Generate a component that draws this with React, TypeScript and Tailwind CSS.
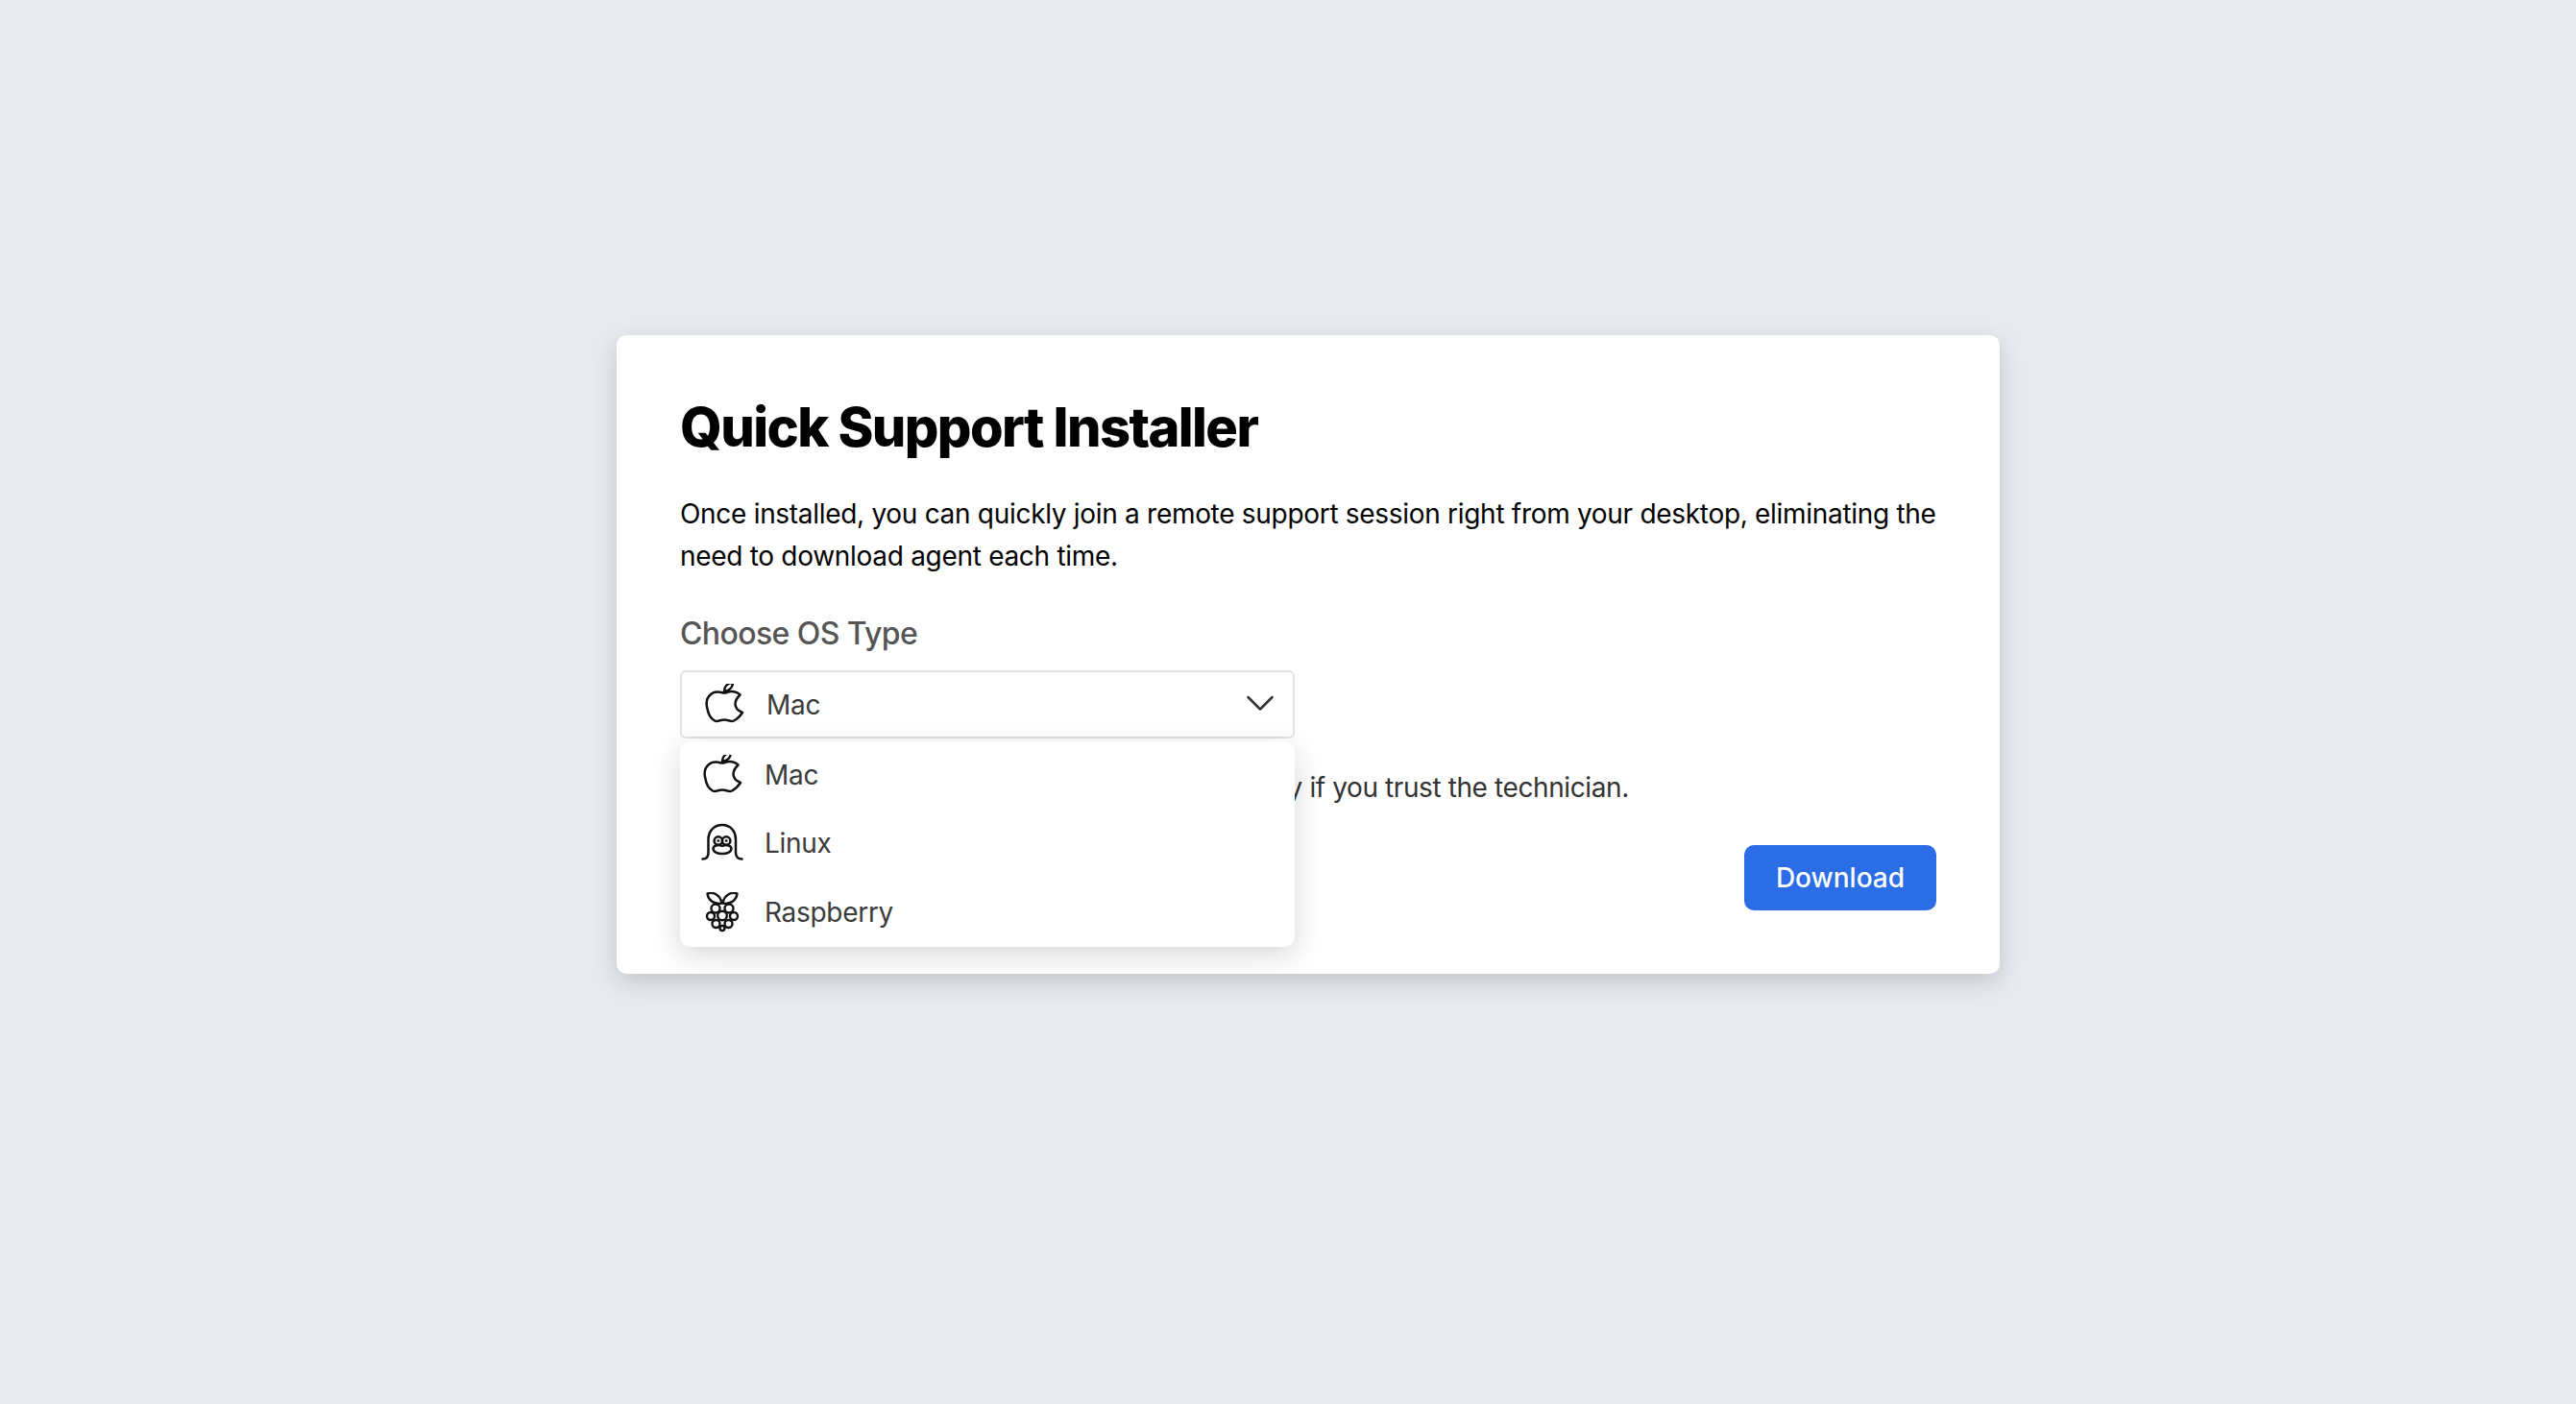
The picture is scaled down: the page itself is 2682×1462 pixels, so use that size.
import React from "react";

function AppleIcon({ y }: { y: number }) {
  return (
    <svg width="44" height="44" viewBox={`5 ${y} 44 44`} fill="none" stroke="#111" strokeWidth="2.5" strokeLinejoin="round" strokeLinecap="round">
      <path d="M26 14.500C21 13 16 13 13 16C9.500 19 8 24 9 29C10 35 13 41.500 17 43.500C20 45 23 42.500 27 42.500C31 42.500 34 45 37 43.500C41 41.500 44 38 46 35C41 33 38.500 30 38.500 26C38.500 22 41 19 43.500 16.500C40 13 34 12.500 31 13.500C29 14.200 28 15 26 14.500Z" />
      <path d="M27 13C27 8.500 30 4.500 36 3.500C36 8 33 12 27 13Z" />
    </svg>
  );
}

function LinuxIcon() {
  return (
    <svg width="44" height="44" viewBox="5 7 44 44" fill="none" stroke="#111" strokeWidth="2.5" strokeLinejoin="round" strokeLinecap="round">
      <path d="M6.500 44.500C10.500 44.500 12.500 42 12.500 38V24C12.500 15 19 9 27 9S41 15 41 24V38C41 42 43.500 44.500 47.500 44.500" />
      <circle cx="22.800" cy="25.500" r="4.200" />
      <circle cx="31.200" cy="25.500" r="4.200" />
      <path d="M27 31C24 29.500 18 29.500 17.500 33.500C17.500 37 22 39 27 39S36.500 37 36.500 33.500C36 29.500 30 29.500 27 31Z" />
      <path d="M22.500 25.500h.5M31 25.500h.5" />
    </svg>
  );
}

function RaspberryIcon() {
  return (
    <svg width="44" height="44" viewBox="5 8 44 44" fill="none" stroke="#111" strokeWidth="2.4" strokeLinejoin="round" strokeLinecap="round">
      <path d="M11.500 9.500C18 7.500 25 11 26.500 19.500C19 21 12.500 17 11.500 9.500Z" />
      <path d="M42.500 9.500C36 7.500 29 11 27.500 19.500C35 21 41.500 17 42.500 9.500Z" />
      <circle cx="20" cy="25" r="4.500" />
      <circle cx="34" cy="25" r="4.500" />
      <circle cx="27" cy="32.500" r="4.800" />
      <circle cx="15" cy="33" r="4" />
      <circle cx="39" cy="33" r="4" />
      <circle cx="20.500" cy="41" r="4" />
      <circle cx="33.500" cy="41" r="4" />
      <circle cx="27" cy="45.500" r="2.500" />
    </svg>
  );
}

function Option({ icon, label }: { icon: React.ReactNode; label: string }) {
  return (
    <div className="flex h-[71.5px] items-center pl-[22px]">
      {icon}
      <span className="ml-[22px] -mt-[2px] text-[28px] tracking-[-0.3px] text-[#3b3b3b]">{label}</span>
    </div>
  );
}

export default function App() {
  return (
    <div className="flex min-h-screen justify-center bg-[#e7ebf0] pl-[42px] pt-[349px] font-['Inter',sans-serif]">
      <div className="h-[665px] w-[1440px] rounded-[10px] bg-white px-[66px] pt-[62px] shadow-[0_8px_24px_rgba(0,0,0,0.16)]">
        <h1 className="text-[56px] leading-[68px] font-extrabold tracking-[-1.6px] text-black">Quick Support Installer</h1>
        <p className="mt-[34px] text-[28px] leading-[44px] tracking-[-0.3px] text-black">
          Once installed, you can quickly join a remote support session right from your desktop, eliminating the need to download agent each time.
        </p>
        <h2 className="mt-[37px] text-[32px] leading-[44px] font-medium tracking-[-0.6px] text-[#555]">Choose OS Type</h2>
        <div className="relative mt-[16px] w-[640px]">
          <div className="flex h-[71px] items-center rounded-[6px] border-2 border-[#e2e2e2] bg-white pl-[22px]">
            <AppleIcon y={5} />
            <span className="ml-[22px] text-[28px] tracking-[-0.3px] text-[#3b3b3b]">Mac</span>
            <svg className="ml-auto mr-[20px] -mt-[4px]" width="28" height="16" viewBox="0 0 28 16" fill="none" stroke="#333" strokeWidth="2.5" strokeLinecap="round" strokeLinejoin="round">
              <path d="M1.500 2l12.500 12.500L26.500 2" />
            </svg>
          </div>
          <div className="absolute left-0 top-[74px] z-10 h-[214px] w-[640px] rounded-[10px] bg-white shadow-[0_8px_30px_rgba(0,0,0,0.16)]">
            <Option icon={<AppleIcon y={6} />} label="Mac" />
            <Option icon={<LinuxIcon />} label="Linux" />
            <Option icon={<RaspberryIcon />} label="Raspberry" />
          </div>
        </div>
        <p className="mt-[31px] whitespace-nowrap text-[28px] leading-[40px] tracking-[-0.4px] text-[#333]">
          Download and install this agent on this device only if you trust the technician.
        </p>
        <div className="mt-[40px] flex justify-end">
          <button className="h-[68px] w-[200px] rounded-[10px] bg-[#2a6de6] text-[28px] font-medium text-white">Download</button>
        </div>
      </div>
    </div>
  );
}
